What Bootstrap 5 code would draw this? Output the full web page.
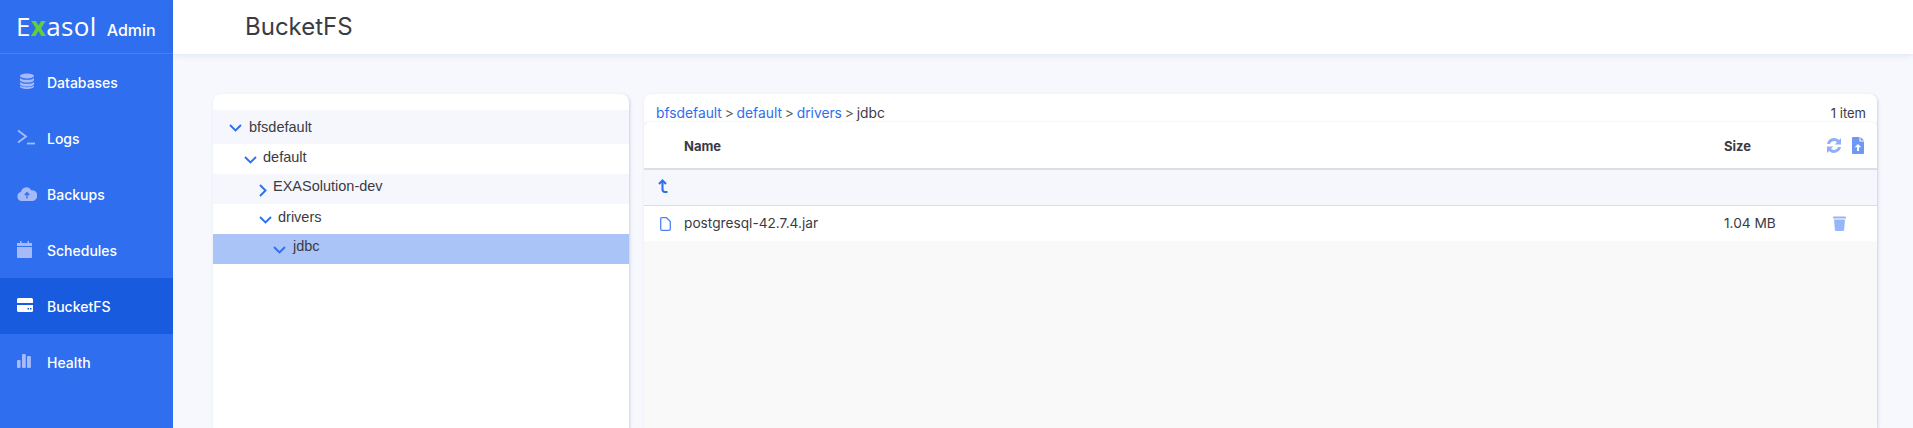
<!DOCTYPE html>
<html lang="en">
<head>
<meta charset="utf-8">
<title>BucketFS</title>
<link rel="stylesheet" href="https://cdn.jsdelivr.net/npm/bootstrap@5.3.0/dist/css/bootstrap.min.css">
<style>
html,body{height:100%;overflow:hidden}
body{font-family:Inter,"Liberation Sans",sans-serif;background:#f6f8fe;color:#3a3b45;font-size:14px}
.app-shell{height:428px}
.side{width:173px;flex:none;background:#2f6eee;color:#fff}
.brand-box{height:54px;border-bottom:1px solid #4a80f0;padding-left:17px;align-items:center}
.brand-logo{font-family:"Open Sans",sans-serif;font-size:26px;line-height:1;letter-spacing:.35px;color:#fff;font-weight:500;margin-top:-2px;margin-left:-1px}
.brand-logo b{color:#5fcf3a;font-weight:700}
.brand-admin{font-size:16px;font-weight:500;margin-left:10px;margin-top:6px}
.side-item{height:56px;padding-left:17px;color:#fff;font-weight:500;font-size:14px;text-decoration:none;align-items:center}
.side-item:hover{color:#fff}
.side-item.on{background:#195bde}
.side-ico{width:30px;flex:none;color:#a6baf9;display:flex;margin-top:-2px}
.side-item.on .side-ico{color:#fff}
.top-bar{height:54px;background:#fff;box-shadow:0 1px 6px rgba(60,70,110,.12);font-size:24px;color:#3a3b45;align-items:center;position:relative}
.head-title{margin-left:72px;margin-top:-1px}
.work{padding:40px 36px 0 40px;gap:15px;min-height:0}
.pane{background:#fff;border-radius:8px 8px 0 0;box-shadow:1px 1px 3px rgba(60,70,110,.22)}
.tree-pane{width:416px;flex:none;padding-top:16px}
.tree-row{height:30px;align-items:center;color:#3a3b45;font-family:"Liberation Sans",sans-serif;font-size:14.5px;line-height:28px}
.tree-row.first{height:34px}
.tree-row.alt{background:#f6f7fd}
.tree-row.sel{background:#abc4f7}
.tree-row span{margin-top:-4px}
.tree-row.first span{margin-top:-1px}
.tree-row.mid span{margin-top:-6px}
.tree-row.sel span{margin-top:-6px}
.tree-row svg{flex:none;color:#2f6eee;margin-top:2px}
.lv0{padding-left:16px}.lv1{padding-left:31px}.lv2{padding-left:46px}.lv3{padding-left:46px}.lv4{padding-left:60px}
.gap0{margin-right:7px}.gap1{margin-right:6px}.gap2{margin-right:6px}.gap3{margin-right:6px}.gap4{margin-right:7px}
.list-pane{min-width:0;background:#f9f9f9;display:flex;flex-direction:column}
.crumb-row{height:28px;background:#fff;border-radius:8px 8px 0 0;padding:9px 11px 0 12px;font-size:13.8px;justify-content:space-between;align-items:flex-start;line-height:20px}
.crumb-row a{color:#2f6eee;text-decoration:none}
.crumb-row .sep{color:#555;margin:0 2.8px}
.count-txt{font-size:13px;color:#3a3b45}
.grid-row{display:grid;grid-template-columns:40px 1fr 102px 51px;align-items:center;border-bottom:1px solid #dcdde6}
.grid-head{height:48px;background:#fff;font-weight:700;font-size:13px;border-bottom:2px solid #dcdde6;border-radius:6px 6px 0 0;box-shadow:0 -1px 2px rgba(60,70,110,.05)}
.head-cell{margin-top:4px}
.grid-up{height:36px;background:#f6f7fd}
.grid-file{height:35px;background:#fff;border-bottom:0;font-size:13.7px}
.grid-row svg{display:block}
.up-ico{margin-left:14px;margin-top:-3px;color:#2f6eee}
.file-ico{margin-left:16px;color:#4f84f2}
.act-ico{gap:10px;color:#8fb0f8}
.trash-ico{color:#98b5f8;padding-left:7px}
</style>
</head>
<body>
<div class="d-flex app-shell">
  <aside class="side d-flex flex-column">
    <div class="brand-box d-flex">
      <span class="brand-logo">E<b>x</b>asol</span>
      <span class="brand-admin">Admin</span>
    </div>
    <a class="side-item d-flex" href="#"><span class="side-ico"><svg width="16" height="16" viewBox="0 0 16 16" fill="currentColor" style="margin-left:2px"><ellipse cx="8" cy="3" rx="7" ry="2.6"/><path d="M1 4.900c1.200 1.200 3.800 1.900 7 1.900s5.800-.7 7-1.900V7c0 1.400-3.100 2.600-7 2.600S1 8.400 1 7zM1 8.900c1.200 1.200 3.800 1.900 7 1.900s5.800-.7 7-1.900V11c0 1.400-3.100 2.600-7 2.600S1 12.400 1 11z"/><path d="M1 12.500c1.200 1.200 3.800 1.700 7 1.700s5.800-.5 7-1.700v1c0 1.400-3.100 2.500-7 2.500s-7-1.100-7-2.500z"/></svg></span>Databases</a>
    <a class="side-item d-flex" href="#"><span class="side-ico"><svg width="19" height="16" viewBox="0 0 19 16" fill="none" stroke="currentColor" stroke-width="1.800"><path d="M1 1.500l8 6-8 6"/><path d="M10 14.500H18"/></svg></span>Logs</a>
    <a class="side-item d-flex" href="#"><span class="side-ico"><svg width="20" height="15" viewBox="0 0 20 15" fill="currentColor"><path d="M5 15a4.500 4.500 0 0 1-1-8.900A5.500 5.500 0 0 1 14.300 4.200 5.300 5.300 0 0 1 15.500 15z"/><path d="M10 12.500V7M7.700 9l2.300-2.300L12.300 9" fill="none" stroke="#2f6eee" stroke-width="1.300"/></svg></span>Backups</a>
    <a class="side-item d-flex" href="#"><span class="side-ico"><svg width="15" height="17" viewBox="0 0 15 17" fill="currentColor"><path d="M3 0h1.500v2H10.500V0H12v2h3v3H0V2h3zM0 6h15v10a1 1 0 0 1-1 1H1a1 1 0 0 1-1-1z"/></svg></span>Schedules</a>
    <a class="side-item on d-flex" href="#"><span class="side-ico"><svg width="16" height="14" viewBox="0 0 16 14" fill="currentColor"><path d="M1.500 0h13A1.500 1.500 0 0 1 16 1.500V5H0V1.500A1.500 1.500 0 0 1 1.500 0zM0 7h16v5.500a1.500 1.500 0 0 1-1.500 1.500h-13A1.500 1.500 0 0 1 0 12.500z"/><path d="M10.500 10h1.500v1.500h-1.500zM13 10h1.500v1.500H13z" fill="#195bde"/></svg></span>BucketFS</a>
    <a class="side-item d-flex" href="#"><span class="side-ico"><svg width="14" height="14" viewBox="0 0 14 14" fill="currentColor"><rect y="6" width="3.600" height="8" rx="1"/><rect x="5" y="0" width="3.800" height="14" rx="1"/><rect x="10" y="2" width="3.900" height="12" rx="1"/></svg></span>Health</a>
  </aside>
  <main class="flex-grow-1 d-flex flex-column" style="min-width:0">
    <header class="top-bar d-flex"><span class="head-title">BucketFS</span></header>
    <div class="work d-flex flex-grow-1">
      <section class="pane tree-pane">
        <div class="tree-row first alt lv0 d-flex"><svg class="gap0" width="13" height="8" viewBox="0 0 13 8" fill="none" stroke="currentColor" stroke-width="1.900"><path d="M1 1l5.500 5.500L12 1"/></svg><span>bfsdefault</span></div>
        <div class="tree-row lv1 d-flex"><svg class="gap1" width="13" height="8" viewBox="0 0 13 8" fill="none" stroke="currentColor" stroke-width="1.900"><path d="M1 1l5.500 5.500L12 1"/></svg><span>default</span></div>
        <div class="tree-row mid alt lv2 d-flex"><svg class="gap2" width="8" height="13" viewBox="0 0 8 13" fill="none" stroke="currentColor" stroke-width="1.900"><path d="M1 1l5.500 5.500L1 12"/></svg><span>EXASolution-dev</span></div>
        <div class="tree-row lv3 d-flex"><svg class="gap3" width="13" height="8" viewBox="0 0 13 8" fill="none" stroke="currentColor" stroke-width="1.900"><path d="M1 1l5.500 5.500L12 1"/></svg><span>drivers</span></div>
        <div class="tree-row sel lv4 d-flex"><svg class="gap4" width="13" height="8" viewBox="0 0 13 8" fill="none" stroke="currentColor" stroke-width="1.900"><path d="M1 1l5.500 5.500L12 1"/></svg><span>jdbc</span></div>
      </section>
      <section class="pane list-pane flex-grow-1">
        <div class="crumb-row d-flex">
          <div><a href="#">bfsdefault</a><span class="sep">&gt;</span><a href="#">default</a><span class="sep">&gt;</span><a href="#">drivers</a><span class="sep">&gt;</span>jdbc</div>
          <span class="count-txt">1 item</span>
        </div>
        <div class="grid-row grid-head">
          <span></span><span class="head-cell">Name</span><span class="head-cell">Size</span>
          <span class="act-ico d-flex align-items-center">
            <svg width="16" height="15" viewBox="0 0 16 15" fill="currentColor"><path d="M8 0a7.300 7.300 0 0 1 5 2L15 0V6.500H8.700l2.300-2.300A4.500 4.500 0 0 0 3.800 6H1A7.300 7.300 0 0 1 8 0zM1 8.500h6.300L5 10.800A4.500 4.500 0 0 0 12.200 9H15A7.300 7.300 0 0 1 3 13L1 15z"/></svg>
            <svg width="12" height="17" viewBox="0 0 12 17" fill="#6d98f5"><path d="M1 0h6.500v4.500H12V16a1 1 0 0 1-1 1H1a1 1 0 0 1-1-1V1a1 1 0 0 1 1-1z"/><path d="M8.500 0L12 3.500H8.500z"/><path d="M6 7l3.300 3.300H7V14H5v-3.700H2.700z" fill="#fff"/></svg>
          </span>
        </div>
        <div class="grid-row grid-up">
          <svg class="up-ico" width="11" height="14" viewBox="0 0 11 14" fill="none" stroke="currentColor" stroke-width="2.100"><path d="M1 5l3.500-3.500L8 5"/><path d="M4.500 2v8.500q0 2 2 2.500h3"/></svg>
        </div>
        <div class="grid-row grid-file">
          <svg class="file-ico" width="11" height="14" viewBox="0 0 11 14" fill="none" stroke="currentColor" stroke-width="1.300"><path d="M1.700.7h4.800L10.300 4.500V12a1.300 1.300 0 0 1-1.300 1.300H2A1.300 1.300 0 0 1 .7 12V1.700A1 1 0 0 1 1.700.7z"/></svg>
          <span>postgresql-42.7.4.jar</span><span>1.04 MB</span>
          <span class="trash-ico"><svg width="13" height="15" viewBox="0 0 13 15" fill="currentColor"><path d="M0 1.300Q0 .5 1 .5h11q1 0 1 .8V2.500H0zM1 3.500h11l-.9 10.500q-.1 1-1.100 1H3q-1 0-1.100-1z"/></svg></span>
        </div>
      </section>
    </div>
  </main>
</div>
</body>
</html>
